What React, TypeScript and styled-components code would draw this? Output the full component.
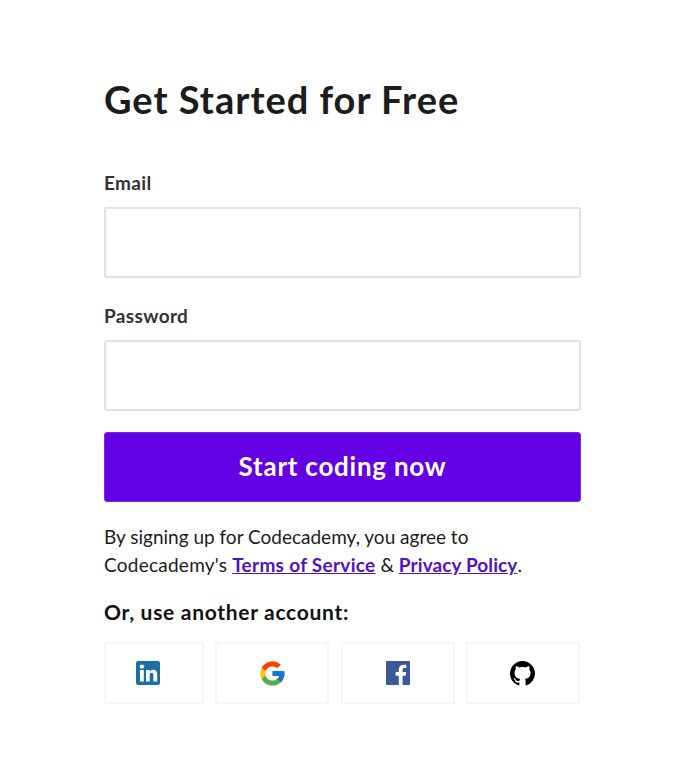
import React from "react"
import styled, { createGlobalStyle } from "styled-components"
import { FcGoogle } from "react-icons/fc"

const GlobalStyle = createGlobalStyle`
  body {
    margin: 0;
    background: #fff;
    font-family: "Lato", "Liberation Sans", sans-serif;
  }
`

const LinkedInIcon = () => (
  <svg width="24" height="24" viewBox="0 0 24 24">
    <rect width="24" height="24" rx="2" fill="#1a71a0" />
    <circle cx="5.9" cy="5.6" r="2.2" fill="#fff" />
    <rect x="4" y="9" width="3.8" height="11.5" fill="#fff" />
    <path
      d="M10 9h3.6v1.6c.6-1 1.8-1.9 3.6-1.9 3 0 4 1.9 4 4.8v7h-3.8v-6.2c0-1.5-.4-2.5-1.7-2.5-1.4 0-2 1-2 2.5v6.2H10z"
      fill="#fff"
    />
  </svg>
)

const FacebookIcon = () => (
  <svg width="24" height="24" viewBox="0 0 24 24">
    <rect width="24" height="24" rx="1" fill="#3b5998" />
    <path
      d="M16.6 24v-9.3h3.1l.5-3.6h-3.6V8.8c0-1 .3-1.8 1.8-1.8h1.9V3.8c-.3 0-1.5-.1-2.8-.1-2.8 0-4.7 1.7-4.7 4.8v2.6H9.6v3.6h3.2V24z"
      fill="#fff"
    />
  </svg>
)

const GithubIcon = () => (
  <svg width="25" height="25" viewBox="0 0 16 16">
    <path
      fill="#000"
      d="M8 0C3.58 0 0 3.58 0 8c0 3.54 2.29 6.53 5.47 7.59.4.07.55-.17.55-.38 0-.19-.01-.82-.01-1.49-2.01.37-2.53-.49-2.69-.94-.09-.23-.48-.94-.82-1.13-.28-.15-.68-.52-.01-.53.63-.01 1.08.58 1.23.82.72 1.21 1.87.87 2.33.66.07-.52.28-.87.51-1.07-1.78-.2-3.64-.89-3.64-3.95 0-.87.31-1.59.82-2.15-.08-.2-.36-1.02.08-2.12 0 0 .67-.21 2.2.82.64-.18 1.32-.27 2-.27.68 0 1.36.09 2 .27 1.53-1.04 2.2-.82 2.2-.82.44 1.1.16 1.92.08 2.12.51.56.82 1.27.82 2.15 0 3.07-1.87 3.75-3.65 3.95.29.25.54.73.54 1.48 0 1.07-.01 1.93-.01 2.2 0 .21.15.46.55.38A8.013 8.013 0 0016 8c0-4.42-3.58-8-8-8z"
    />
  </svg>
)

const App: React.FC = () => {
  return (
    <>
      <GlobalStyle />
      <S.Page>
        <S.Title>Get Started for Free</S.Title>
        <S.Form onSubmit={(e) => e.preventDefault()}>
          <S.Label htmlFor="email">Email</S.Label>
          <S.Input id="email" type="email" />
          <S.Label htmlFor="password">Password</S.Label>
          <S.Input id="password" type="password" />
          <S.Submit type="submit">Start coding now</S.Submit>
        </S.Form>
        <S.Terms>
          By signing up for Codecademy, you agree to
          <br />
          <S.Brand>Codecademy's</S.Brand> <S.TermsLink href="#" $spacing={0.3}>Terms of Service</S.TermsLink> &amp;{" "}
          <S.TermsLink href="#" $spacing={0.1}>Privacy Policy</S.TermsLink>.
        </S.Terms>
        <S.OtherTitle>Or, use another account:</S.OtherTitle>
        <S.Socials>
          <S.SocialButton $width={100} $offset={13} aria-label="LinkedIn">
            <LinkedInIcon />
          </S.SocialButton>
          <S.SocialButton $width={114} aria-label="Google">
            <FcGoogle size={29} />
          </S.SocialButton>
          <S.SocialButton $width={114} aria-label="Facebook">
            <FacebookIcon />
          </S.SocialButton>
          <S.SocialButton $width={114} aria-label="GitHub">
            <GithubIcon />
          </S.SocialButton>
        </S.Socials>
      </S.Page>
    </>
  )
}

export default App

const S = {
  Page: styled.div`
    display: flex;
    flex-direction: column;
    width: 477px;
    height: 776px;
    box-sizing: border-box;
    margin-left: 104px;
    padding-top: 76px;
  `,
  Title: styled.h1`
    margin: 0 0 49px;
    font-size: 38px;
    line-height: 46px;
    font-weight: 700;
    color: #1c1c1c;
    letter-spacing: 1px;
  `,
  Form: styled.form`
    display: flex;
    flex-direction: column;
  `,
  Label: styled.label`
    font-size: 19px;
    line-height: 24px;
    font-weight: 700;
    color: #333;
    letter-spacing: 0.35px;
    margin-bottom: 12px;
  `,
  Input: styled.input`
    box-sizing: border-box;
    height: 71px;
    margin-bottom: 26px;
    border: 2px solid #e2e2e2;
    border-radius: 3px;
    background: #fff;
    outline: none;
  `,
  Submit: styled.button`
    height: 70px;
    margin-top: -5px;
    padding: 0 0 2px;
    border: 1px solid #7a2be8;
    border-radius: 3px;
    background: #6400e4;
    color: #fff;
    font-family: inherit;
    font-size: 26px;
    font-weight: 700;
    letter-spacing: 0.75px;
  `,
  Terms: styled.p`
    margin: 21px 0 0;
    font-size: 19px;
    line-height: 28px;
    color: #1c1c1c;
  `,
  Brand: styled.span`
    letter-spacing: 0.25px;
  `,
  TermsLink: styled.a<{ $spacing: number }>`
    color: #5012c4;
    font-weight: 700;
    letter-spacing: ${(p) => p.$spacing}px;
  `,
  OtherTitle: styled.h2`
    margin: 20px 0 0;
    font-size: 21px;
    line-height: 26px;
    font-weight: 700;
    color: #111;
    letter-spacing: 0.7px;
  `,
  Socials: styled.div`
    display: flex;
    gap: 11.33px;
    margin-top: 17px;
  `,
  SocialButton: styled.button<{ $width: number; $offset?: number }>`
    display: flex;
    align-items: center;
    justify-content: center;
    box-sizing: border-box;
    width: ${(p) => p.$width}px;
    height: 62px;
    padding: 0 ${(p) => p.$offset ?? 0}px 0 0;
    border: 2px solid #f6f6f6;
    background: #fff;
  `,
}
